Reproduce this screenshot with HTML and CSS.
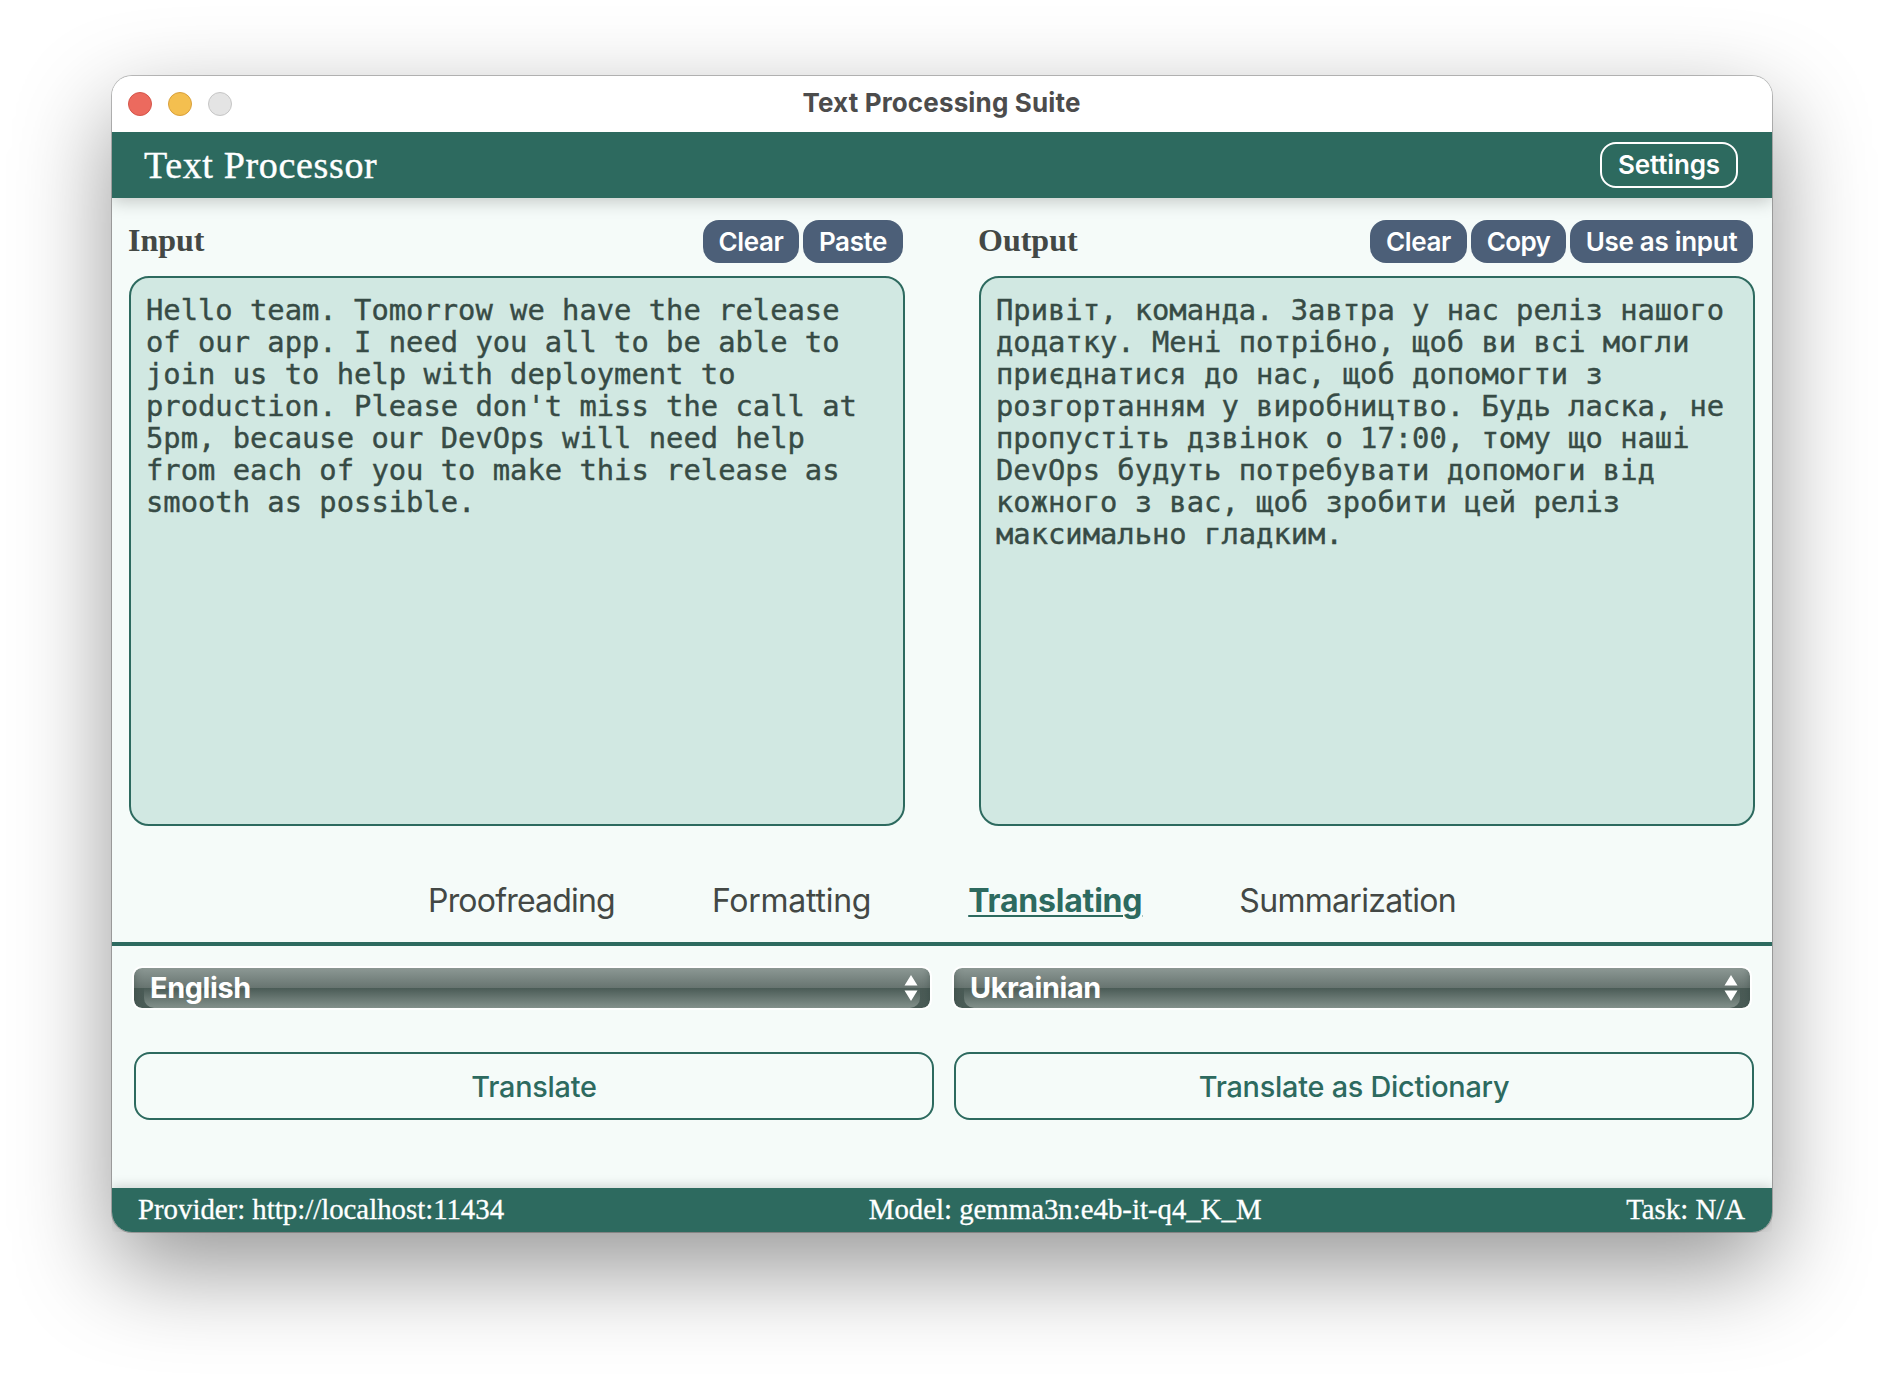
FILE: index.html
```html
<!DOCTYPE html>
<html lang="en">
<head>
<meta charset="utf-8">
<title>Text Processing Suite</title>
<link rel="stylesheet" href="styles.css">
</head>
<body>
<div class="window">
  <div class="titlebar">
    <div class="lights">
      <span class="light light-close"></span>
      <span class="light light-minimize"></span>
      <span class="light light-zoom"></span>
    </div>
    <div class="window-title">Text Processing Suite</div>
  </div>
  <header class="app-header">
    <h1 class="app-name">Text Processor</h1>
    <button class="settings-button">Settings</button>
  </header>
  <main class="content">
    <div class="panels">
      <section class="panel">
        <div class="panel-head">
          <h2 class="panel-title">Input</h2>
          <div class="panel-actions">
            <button class="chip chip-clear">Clear</button>
            <button class="chip chip-paste">Paste</button>
          </div>
        </div>
        <textarea class="editor" spellcheck="false">Hello team. Tomorrow we have the release of our app. I need you all to be able to join us to help with deployment to production. Please don't miss the call at 5pm, because our DevOps will need help from each of you to make this release as smooth as possible.</textarea>
      </section>
      <section class="panel">
        <div class="panel-head">
          <h2 class="panel-title">Output</h2>
          <div class="panel-actions">
            <button class="chip chip-clear-output">Clear</button>
            <button class="chip chip-copy">Copy</button>
            <button class="chip chip-reuse">Use as input</button>
          </div>
        </div>
        <textarea class="editor" spellcheck="false" lang="uk">Привіт, команда. Завтра у нас реліз нашого додатку. Мені потрібно, щоб ви всі могли приєднатися до нас, щоб допомогти з розгортанням у виробництво. Будь ласка, не пропустіть дзвінок о 17:00, тому що наші DevOps будуть потребувати допомоги від кожного з вас, щоб зробити цей реліз максимально гладким.</textarea>
      </section>
    </div>
    <nav class="tabs">
      <a class="tab tab-proofreading">Proofreading</a>
      <a class="tab tab-formatting">Formatting</a>
      <a class="tab tab-active">Translating</a>
      <a class="tab tab-summarization">Summarization</a>
    </nav>
    <div class="controls">
      <div class="language">
        <span class="language-name">English</span>
        <svg class="arrows" width="14" height="26" viewBox="0 0 14 26"><path d="M7 0 13.5 10.5H.5zM7 26 13.5 15.5H.5z" fill="#fff"/></svg>
      </div>
      <div class="language">
        <span class="language-name">Ukrainian</span>
        <svg class="arrows" width="14" height="26" viewBox="0 0 14 26"><path d="M7 0 13.5 10.5H.5zM7 26 13.5 15.5H.5z" fill="#fff"/></svg>
      </div>
      <button class="action">Translate</button>
      <button class="action">Translate as Dictionary</button>
    </div>
  </main>
  <footer class="status">
    <span>Provider: http://localhost:11434</span>
    <span>Model: gemma3n:e4b-it-q4_K_M</span>
    <span>Task: N/A</span>
  </footer>
</div>
</body>
</html>
```
FILE: styles.css
```css
* {
  box-sizing: border-box;
}

body {
  margin: 0;
  width: 1884px;
  height: 1380px;
  padding: 76px 112px 0;
  overflow: hidden;
  background: #fff;
  font-family: Inter, "Liberation Sans", sans-serif;
}

h1,
h2 {
  margin: 0;
  font-weight: 400;
}

button {
  font-family: inherit;
  padding: 0;
  margin: 0;
}

.window {
  display: flex;
  flex-direction: column;
  width: 1660px;
  height: 1156px;
  border-radius: 20px;
  background: #f5fbf9;
  box-shadow: 0 0 0 1px rgba(0, 0, 0, 0.24), 0 36px 96px rgba(0, 0, 0, 0.42);
}

.titlebar {
  display: grid;
  grid-template-columns: 200px 1fr 200px;
  align-items: center;
  height: 56px;
  border-radius: 20px 20px 0 0;
  background: #fff;
}

.lights {
  display: flex;
  gap: 16px;
  padding-left: 16px;
}

.light {
  width: 24px;
  height: 24px;
  border: 1px solid;
  border-radius: 50%;
}

.light-close {
  background: #ec6a5e;
  border-color: #d5554a;
}

.light-minimize {
  background: #f4bf4f;
  border-color: #d9a03b;
}

.light-zoom {
  background: #e4e4e4;
  border-color: #c6c6c6;
}

.window-title {
  padding: 0 1px 2px 0;
  text-align: center;
  font-size: 26px;
  font-weight: 700;
  line-height: 32px;
  letter-spacing: 0.15px;
  color: #4c4c4c;
}

.app-header {
  display: flex;
  align-items: center;
  justify-content: space-between;
  height: 66px;
  padding: 0 34px 0 32px;
  background: #2d6a5f;
  color: #fff;
  box-shadow: 0 4px 16px rgba(0, 0, 0, 0.2);
  clip-path: inset(0 0 -30px 0);
}

.app-name {
  padding-bottom: 1px;
  font-family: "Liberation Serif", serif;
  font-size: 38px;
  line-height: 44px;
  letter-spacing: 0.65px;
  -webkit-text-stroke: 0.4px;
}

.settings-button {
  width: 138px;
  height: 46px;
  padding: 0 0 2px;
  border: 2px solid #fff;
  border-radius: 16px;
  background: transparent;
  color: #fff;
  font-size: 26px;
  font-weight: 600;
  letter-spacing: -0.15px;
}

.content {
  flex: 1;
}

.panels {
  display: grid;
  grid-template-columns: 776px 776px;
  gap: 74px;
  padding: 22px 17px 0;
}

.panel-head {
  display: flex;
  justify-content: space-between;
  height: 43px;
  padding-right: 2px;
}

.panel-title {
  margin-left: -1px;
  font-family: "Liberation Serif", serif;
  font-size: 32px;
  font-weight: 700;
  line-height: 41px;
  color: #434845;
}

.panel-actions {
  display: flex;
  gap: 4px;
}

.chip {
  height: 43px;
  padding: 0 0 1px;
  border: 0;
  border-radius: 16px;
  background: #4c5f78;
  color: #fff;
  font-size: 26px;
  font-weight: 600;
}

.chip-clear {
  width: 96px;
  letter-spacing: -0.4px;
}

.chip-clear-output {
  width: 97px;
  letter-spacing: -0.4px;
}

.chip-paste {
  width: 100px;
  letter-spacing: -0.4px;
}

.chip-copy {
  width: 95px;
  letter-spacing: -0.6px;
}

.chip-reuse {
  width: 183px;
  letter-spacing: -0.3px;
}

.editor {
  display: block;
  width: 776px;
  height: 550px;
  margin: 13px 0 0;
  padding: 16px 15px;
  border: 2px solid #2d6a5f;
  border-radius: 20px;
  outline: 0;
  resize: none;
  overflow: hidden;
  background: #d1e8e2;
  color: #374b45;
  font-family: "DejaVu Sans Mono", monospace;
  font-size: 28.8px;
  line-height: 32px;
  -webkit-text-stroke: 0.4px;
}

.tabs {
  display: flex;
  justify-content: center;
  gap: 97px;
  height: 120px;
  padding-top: 55px;
  border-bottom: 4px solid #2d6a5f;
  font-size: 32px;
  line-height: 40px;
  color: #434845;
}

.tab-proofreading {
  letter-spacing: -0.8px;
}

.tab-formatting {
  letter-spacing: -0.25px;
}

.tab-active {
  color: #2d6a5f;
  font-weight: 700;
  letter-spacing: -0.2px;
  text-decoration: underline;
  text-decoration-thickness: 2px;
  text-underline-offset: 3px;
}

.tab-summarization {
  letter-spacing: -0.7px;
}

.controls {
  display: grid;
  grid-template-columns: 800px 800px;
  grid-template-rows: 40px 68px;
  gap: 44px 20px;
  padding: 22px 0 0 22px;
}

.language {
  position: relative;
  display: flex;
  align-items: center;
  justify-content: space-between;
  width: 796px;
  padding: 0 12px 0 16px;
  border-radius: 8px;
  overflow: hidden;
  background: linear-gradient(#8c9894, #677470 50%, #4a5b56 50%, #4b5c57);
  outline: 2px solid #fff;
  color: #fff;
}

.language::before {
  content: "";
  position: absolute;
  inset: 20px 10px 0;
  border-radius: 0 0 10px 10px;
  background: linear-gradient(#4a5b56, #84918c);
}

.language::after {
  content: "";
  position: absolute;
  inset: -8px 0;
  border-radius: 8px;
  box-shadow: inset 0 0 8px rgba(40, 60, 54, 0.4);
}

.language-name,
.arrows {
  position: relative;
  z-index: 1;
}

.language-name {
  font-size: 28.8px;
  font-weight: 700;
  line-height: 40px;
  letter-spacing: -0.35px;
}

.action {
  border: 2px solid #2d6a5f;
  border-radius: 16px;
  background: transparent;
  color: #2d6a5f;
  font-size: 28.8px;
  font-weight: 500;
  letter-spacing: -0.22px;
}

.status {
  display: flex;
  justify-content: space-between;
  align-items: center;
  height: 44px;
  padding: 0 27px 2px 26px;
  border-radius: 0 0 20px 20px;
  background: #2d6a5f;
  box-shadow: 0 -2px 12px rgba(0, 0, 0, 0.16);
  clip-path: inset(-30px 0 0 0);
  color: #fff;
  font-family: "Liberation Serif", serif;
  font-size: 28.8px;
  -webkit-text-stroke: 0.3px;
}
```
